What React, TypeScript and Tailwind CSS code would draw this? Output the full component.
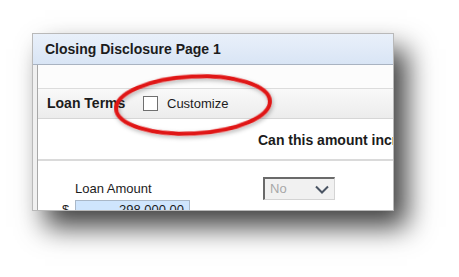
import React from 'react';

const font = { fontFamily: '"Liberation Sans", Arial, sans-serif' };

const RedCircle: React.FC = () => (
  <svg className="pointer-events-none absolute inset-0" width={459} height={277}>
    <defs>
      <filter id="glow" x="-20%" y="-40%" width="140%" height="180%">
        <feDropShadow dx="1" dy="2" stdDeviation="2" floodColor="#000" floodOpacity="0.3" />
      </filter>
    </defs>
    <ellipse
      cx={193}
      cy={105}
      rx={77}
      ry={28.5}
      transform="rotate(-3 193 105)"
      fill="none"
      stroke="#e01414"
      strokeWidth={4}
      filter="url(#glow)"
    />
  </svg>
);

export default function App() {
  return (
    <div className="relative h-[277px] w-[459px] overflow-hidden bg-white" style={font}>
      <div className="ml-[32px] mt-[33px] flex h-[178px] w-[362px] flex-col overflow-hidden border border-[#b9b9b9] bg-white shadow-[13px_16px_26px_rgba(0,0,0,0.75)]">
        {/* header */}
        <div className="flex h-[31px] shrink-0 items-center border-b border-[#a9b3c1] bg-gradient-to-b from-[#e9f0fa] to-[#d9e5f5] pl-[12px]">
          <span className="text-[14px] font-bold text-[#1c1c1c]">Closing Disclosure Page 1</span>
        </div>

        <div className="flex flex-1">
          <div className="w-[5px] shrink-0 border-r border-[#a8a8a8] bg-[#f0f0f0]" />

          <div className="flex min-w-0 flex-1 flex-col">
            <div className="h-[24px] shrink-0 border-b border-[#dcdcdc] bg-[#fcfcfc]" />

            <div className="flex h-[30px] shrink-0 items-center border-b border-[#d6d6d6] bg-gradient-to-b from-[#f9f9f9] to-[#ececec] pl-[9px]">
              <span className="w-[89px] whitespace-nowrap text-[14px] font-bold text-[#1c1c1c]">Loan Terms</span>
              <span className="ml-[7px] h-[15px] w-[15px] border border-[#6f6f6f] bg-white" />
              <span className="ml-[9px] text-[13px] text-[#1c1c1c]">Customize</span>
            </div>

            <div className="flex h-[42px] shrink-0 items-center border-b-2 border-[#dadada] pl-[220px] pt-[2px]">
              <span className="whitespace-nowrap text-[14px] font-bold text-[#1c1c1c]">Can this amount incr</span>
            </div>

            <div className="flex items-start pt-[16px]">
              <div className="ml-[24px] flex w-[128px] flex-col pt-[3px]">
                <span className="pl-[13px] text-[13px] leading-[17px] text-[#1c1c1c]">Loan Amount</span>
                <div className="mt-[3px] flex items-center">
                  <span className="w-[13px] text-[13px] text-[#1c1c1c]">$</span>
                  <div className="flex h-[20px] w-[115px] items-center justify-end border border-[#aab8c8] bg-[#cfe5fd] pr-[5px] text-[13px] text-[#1c1c1c]">
                    298,000.00
                  </div>
                </div>
              </div>

              <div className="ml-[73px] flex h-[23px] w-[72px] items-center justify-between border-l-2 border-t-2 border-b border-r border-l-[#6a6a6a] border-t-[#6a6a6a] border-b-[#d4d4d4] border-r-[#d4d4d4] bg-[#f1f1f1] pl-[5px] pr-[5px]">
                <span className="text-[13px] text-[#a8a8a8]">No</span>
                <svg width="14" height="9" viewBox="0 0 14 9">
                  <path d="M1 1.5 L7 7.5 L13 1.5" fill="none" stroke="#4a5463" strokeWidth="2" />
                </svg>
              </div>
            </div>
          </div>
        </div>
      </div>

      <RedCircle />
    </div>
  );
}
